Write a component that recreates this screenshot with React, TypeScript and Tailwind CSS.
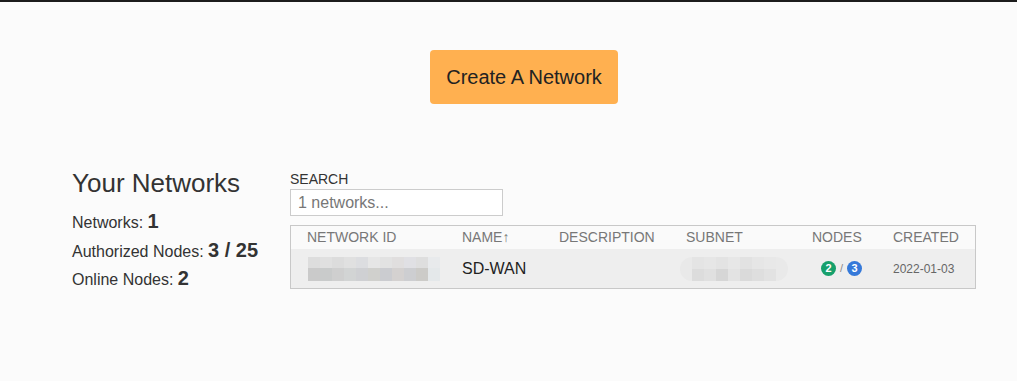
import React from "react";

const idTop = ["#dddddd", "#e0e0e0", "#dcdcdc", "#e0e0e0", "#dcdde0", "#e6e6e6", "#e2e2e2", "#e0dede", "#e0e0e4", "#dedede", "#e8eaec"];
const idBot = ["#cacaca", "#c9cbcb", "#cfcfcf", "#d2d4d4", "#cfd0d3", "#d0d0cd", "#cbccd0", "#d4d1d0", "#cdced1", "#cccbc8", "#e4e8ea"];
const snTop = ["#e4e4e4", "#e6e6e6", "#e3e3e3", "#e7e7e7", "#e2e2e2", "#e6e6e6", "#e8e8e8"];
const snBot = ["#dcdcdc", "#e0e0e0", "#d6d6d6", "#e3e3e3", "#dadada", "#dedede", "#e2e2e2"];

function Blocks({ top, bot, h1, h2 }: { top: string[]; bot: string[]; h1: number; h2: number }) {
  return (
    <div className="flex flex-col">
      <div className="flex">
        {top.map((c, i) => (
          <div key={i} className="w-[12px]" style={{ background: c, height: h1 }} />
        ))}
      </div>
      <div className="flex">
        {bot.map((c, i) => (
          <div key={i} className="w-[12px]" style={{ background: c, height: h2 }} />
        ))}
      </div>
    </div>
  );
}

export default function App() {
  return (
    <div
      className="min-h-[381px] bg-[#fbfbfb] border-t-2 border-[#1c1c1c] text-[#333]"
      style={{ fontFamily: '"Liberation Sans", Arial, sans-serif' }}
    >
      <div className="flex justify-center pl-[31px] pt-[48px]">
        <button className="h-[54px] w-[188px] rounded-[4px] bg-[#ffb050] text-[20px] text-[#222]">
          Create A Network
        </button>
      </div>

      <div className="flex mt-[64px] pl-[72px]">
        <div className="w-[218px]">
          <h2 className="text-[26px] leading-[30px] text-[#333]">Your Networks</h2>
          <div className="mt-[11px] text-[16px] leading-[28.5px] text-[#333]">
            <div>
              Networks: <span className="text-[20px] font-bold leading-none">1</span>
            </div>
            <div>
              Authorized Nodes: <span className="text-[20px] font-bold leading-none">3 / 25</span>
            </div>
            <div>
              Online Nodes: <span className="text-[20px] font-bold leading-none">2</span>
            </div>
          </div>
        </div>

        <div className="pt-[3px]">
          <div className="text-[14px] leading-[17px] text-[#333]">SEARCH</div>
          <input
            className="mt-[1px] block h-[27px] w-[213px] border border-[#cccccc] bg-white pl-[7px] text-[16px] outline-none placeholder:text-[#777]"
            placeholder="1 networks..."
          />
          <div className="mt-[9px] w-[686px] border border-[#c8c8c8]">
            <div className="grid grid-cols-[171px_97px_127px_126px_81px_1fr] h-[23px] items-center text-[14px] text-[#777] bg-[#fafafa]">
              <div className="pl-[16px]">NETWORK ID</div>
              <div>NAME↑</div>
              <div>DESCRIPTION</div>
              <div>SUBNET</div>
              <div>NODES</div>
              <div>CREATED</div>
            </div>
            <div className="grid grid-cols-[171px_97px_127px_126px_81px_1fr] h-[39px] items-center bg-[#eeeeee]">
              <div className="pl-[17px]">
                <Blocks top={idTop} bot={idBot} h1={11} h2={13} />
              </div>
              <div className="text-[16px] text-[#222]">SD-WAN</div>
              <div />
              <div>
                <div className="-ml-[6px] flex h-[24px] w-[108px] items-center rounded-[12px] bg-[#e9e9e9] pl-[12px]">
                  <Blocks top={snTop} bot={snBot} h1={12} h2={12} />
                </div>
              </div>
              <div className="flex items-center pl-[9px] text-[11px]">
                <span className="flex h-[15px] w-[15px] items-center justify-center rounded-full bg-[#17a06c] font-bold text-white">2</span>
                <span className="mx-[4px] text-[#888]">/</span>
                <span className="flex h-[15px] w-[15px] items-center justify-center rounded-full bg-[#3579d9] font-bold text-white">3</span>
              </div>
              <div className="text-[12px] text-[#666]">2022-01-03</div>
            </div>
          </div>
        </div>
      </div>
    </div>
  );
}
